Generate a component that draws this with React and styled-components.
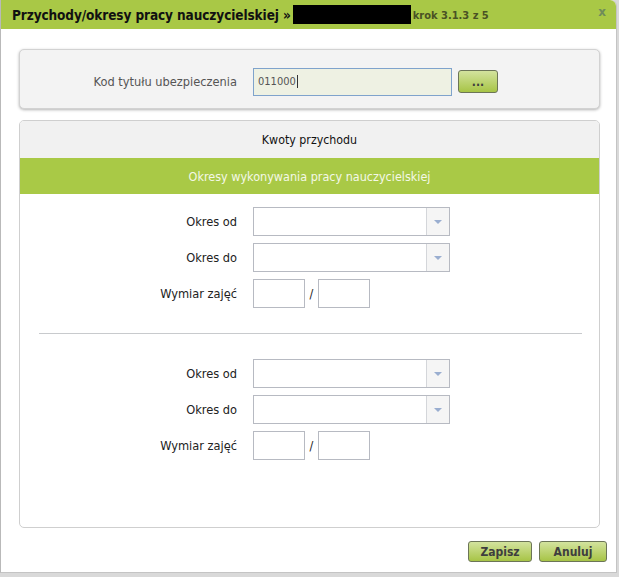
import React from 'react';
import styled, { createGlobalStyle } from 'styled-components';

const GlobalStyle = createGlobalStyle`
  html, body {
    margin: 0;
    padding: 0;
    background: #d9d9d9;
  }
  body {
    font-family: "DejaVu Sans Condensed", "Liberation Sans", sans-serif;
    font-size: 12px;
  }
`;

const Window = styled.div`
  width: 615px;
  height: 572px;
  background: #fff;
  border-left: 1px solid #b9b9b9;
  border-right: 1px solid #c4c4c4;
  border-bottom: 1px solid #c4c4c4;
  border-top-right-radius: 6px;
  display: flex;
  flex-direction: column;
  box-sizing: content-box;
`;

const Header = styled.div`
  height: 29px;
  background: #a9c846;
  border-top-right-radius: 6px;
  display: flex;
  align-items: center;
  padding: 0 11px 0 11px;
  position: relative;
`;

const Title = styled.span`
  font-weight: bold;
  font-size: 13.5px;
  color: #111;
  letter-spacing: -0.1px;
`;

const Hidden = styled.span`
  display: inline-block;
  width: 118px;
  height: 19px;
  background: #000;
  margin-left: 2px;
`;

const Step = styled.span`
  font-weight: bold;
  font-size: 11px;
  color: #4a5224;
  margin-left: 2px;
  margin-top: 1px;
`;

const Close = styled.span`
  position: absolute;
  right: 10px;
  top: 5px;
  font-weight: bold;
  font-size: 12px;
  color: #6f8c5a;
  font-family: "DejaVu Sans", sans-serif;
`;

const Body = styled.div`
  flex: 1;
  display: flex;
  flex-direction: column;
  padding: 20px 16px 0 18px;
`;

const CodePanel = styled.div`
  height: 58px;
  background: #f3f3f3;
  border: 1px solid #d2d2d2;
  border-radius: 5px;
  box-shadow: 0 1px 3px rgba(0, 0, 0, 0.3);
  display: flex;
  align-items: center;
  padding-top: 5px;
  box-sizing: border-box;
  height: 60px;
`;

const Row = styled.div`
  display: flex;
  align-items: center;
  height: 29px;
  & + & {
    margin-top: 7px;
  }
`;

const Label = styled.label`
  width: 233px;
  text-align: right;
  padding-right: 16px;
  box-sizing: border-box;
  color: ${p => (p.muted ? '#555' : '#222')};
  font-size: 12.7px;
  flex-shrink: 0;
`;

const CodeInput = styled.div`
  width: 193px;
  height: 26px;
  border: 1px solid #7fa3cc;
  background: #eef1e3;
  display: flex;
  align-items: center;
  padding-left: 4px;
  font-size: 11px;
  color: #555;
`;

const Caret = styled.span`
  display: inline-block;
  width: 1px;
  height: 13px;
  background: #333;
  margin-left: 1px;
`;

const GreenButton = styled.button`
  height: ${p => p.h || 22}px;
  min-width: ${p => p.w || 40}px;
  margin-left: ${p => p.ml || 0}px;
  border: 1px solid #6c7557;
  border-radius: 3px;
  background: linear-gradient(#d3e39e, #a7c446);
  font-family: "DejaVu Sans Condensed", "Liberation Sans", sans-serif;
  font-weight: bold;
  font-size: ${p => p.fs || 12}px;
  color: #3e3e3e;
  padding: 0 8px;
  cursor: pointer;
`;

const MainPanel = styled.div`
  margin-top: 11px;
  height: 406px;
  border: 1px solid #cfcfcf;
  border-radius: 5px;
  overflow: hidden;
  display: flex;
  flex-direction: column;
`;

const PanelHead = styled.div`
  height: 37px;
  background: #f1f1f1;
  display: flex;
  align-items: center;
  justify-content: center;
  color: #111;
  font-size: 12.3px;
`;

const GreenBar = styled.div`
  height: 36px;
  background: #a9c946;
  display: flex;
  align-items: center;
  justify-content: center;
  color: #f4f8e6;
  font-size: 12.5px;
`;

const Group = styled.div`
  padding-top: ${p => p.pt}px;
`;

const Divider = styled.div`
  height: 1px;
  background: #c8cacd;
  margin: 25px 17px 25px 19px;
`;

const Select = styled.div`
  width: 195px;
  height: 27px;
  border: 1px solid #b7bac2;
  display: flex;
  justify-content: flex-end;
  background: #fff;
`;

const SelectArrow = styled.div`
  width: 22px;
  border-left: 1px solid #d4d6da;
  background: #f5f5f5;
  display: flex;
  align-items: center;
  justify-content: center;
  &::after {
    content: '';
    border-left: 4px solid transparent;
    border-right: 4px solid transparent;
    border-top: 4px solid #9aaed0;
    margin-top: 1px;
  }
`;

const SmallInput = styled.div`
  width: 50px;
  height: 27px;
  border: 1px solid #b7bac2;
`;

const Slash = styled.span`
  width: 13px;
  text-align: center;
  color: #222;
  font-size: 12.5px;
`;

const Footer = styled.div`
  display: flex;
  justify-content: flex-end;
  padding: 13px 9px 0 0;
  margin-right: -16px;
`;

function PeriodGroup({ pt }) {
  return (
    <Group pt={pt}>
      <Row>
        <Label>Okres od</Label>
        <Select>
          <SelectArrow />
        </Select>
      </Row>
      <Row>
        <Label>Okres do</Label>
        <Select>
          <SelectArrow />
        </Select>
      </Row>
      <Row>
        <Label>Wymiar zajęć</Label>
        <SmallInput />
        <Slash>/</Slash>
        <SmallInput />
      </Row>
    </Group>
  );
}

export default function App() {
  return (
    <>
      <GlobalStyle />
      <Window>
        <Header>
          <Title>Przychody/okresy pracy nauczycielskiej »</Title>
          <Hidden />
          <Step>krok 3.1.3 z 5</Step>
          <Close>x</Close>
        </Header>
        <Body>
          <CodePanel>
            <Row>
              <Label muted>Kod tytułu ubezpieczenia</Label>
              <CodeInput>
                011000
                <Caret />
              </CodeInput>
              <GreenButton ml={6} w={40} h={23}>
                ...
              </GreenButton>
            </Row>
          </CodePanel>
          <MainPanel>
            <PanelHead>Kwoty przychodu</PanelHead>
            <GreenBar>Okresy wykonywania pracy nauczycielskiej</GreenBar>
            <PeriodGroup pt={13} />
            <Divider />
            <PeriodGroup pt={0} />
          </MainPanel>
          <Footer>
            <GreenButton w={64} h={21}>
              Zapisz
            </GreenButton>
            <GreenButton w={68} h={21} ml={7}>
              Anuluj
            </GreenButton>
          </Footer>
        </Body>
      </Window>
    </>
  );
}
